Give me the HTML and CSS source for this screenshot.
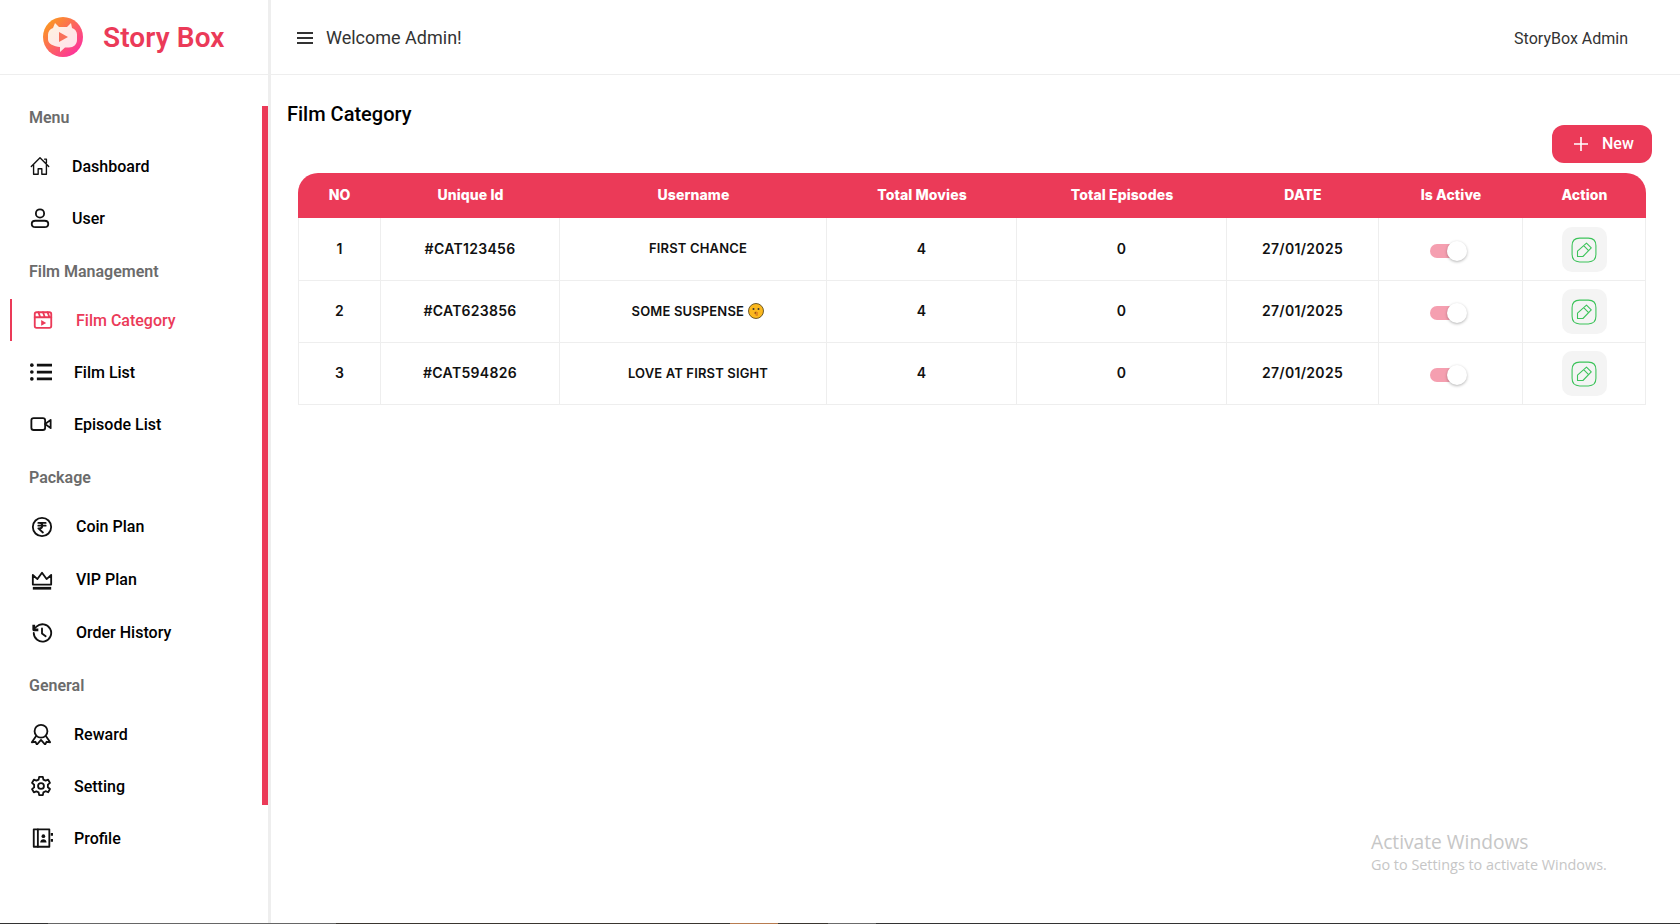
FILE: index.html
```html
<!DOCTYPE html>
<html lang="en">
<head>
    <meta charset="UTF-8">
    <title>Story Box</title>
    <link rel="stylesheet" href="styles.css">
</head>
<body>
    <!-- Sidebar -->
    <aside class="sidebar">
        <div class="brand">
            <svg class="brand-logo" viewBox="0 0 40 40">
                <defs>
                    <linearGradient id="logoGrad" x1="0.1" y1="0.1" x2="0.9" y2="0.9">
                        <stop offset="0" stop-color="#fb9a1e"/>
                        <stop offset="1" stop-color="#fd2fa0"/>
                    </linearGradient>
                    <linearGradient id="bubbleGrad" x1="0" y1="0" x2="1" y2="1">
                        <stop offset="0" stop-color="#fff3df"/>
                        <stop offset="1" stop-color="#ffe0ee"/>
                    </linearGradient>
                </defs>
                <circle cx="20" cy="20" r="20" fill="url(#logoGrad)"/>
                <path d="M12 6l4 4h8l4-4 1 5c3 1.200 5 3.500 5 6.500v5.500c0 4.500-3.500 7.500-8 7.500h-4l-5 4.500v-5c-6-.5-12-3-12-7.500V17.500c0-3 2-5.300 5-6.500z" fill="url(#bubbleGrad)"/>
                <path d="M16 15l9 5-9 5z" fill="#f8705a"/>
            </svg>
            <span class="brand-name">Story Box</span>
        </div>
        <nav class="nav">
            <div class="nav-group">
                <p class="nav-label">Menu</p>
                <a class="nav-item text-72">
                    <svg class="nav-icon" viewBox="0 0 24 24"><path d="M2.500 12.500L12 3l9.500 9.500M5 10.500V21h5v-6h4v6h5V10.500M17 4.500h2v4"/></svg>
                    <span>Dashboard</span>
                </a>
                <a class="nav-item text-72">
                    <svg class="nav-icon" viewBox="0 0 24 24"><circle class="bold" cx="12" cy="7" r="4.500"/><path class="bold" d="M7 15h10c2.500 0 4 1.500 4 3.500s-1.500 3.500-4 3.500H7c-2.500 0-4-1.500-4-3.500S4.500 15 7 15z"/></svg>
                    <span>User</span>
                </a>
            </div>
            <div class="nav-group">
                <p class="nav-label">Film Management</p>
                <a class="nav-item active text-76">
                    <svg class="nav-icon shift-3" viewBox="0 0 24 24"><rect class="bold" x="3" y="3.500" width="18" height="17" rx="2"/><path class="bold" d="M3 9h18M7 3.500l2 5.500M12 3.500l2 5.500M17 3.500l2 5.500"/><path class="solid" d="M10 12l5.500 3.200-5.500 3.200z"/></svg>
                    <span>Film Category</span>
                </a>
                <a class="nav-item text-74">
                    <svg class="nav-icon shift-1" viewBox="0 0 24 24"><path class="thick" d="M7.500 4.500H24M7.500 12H24M7.500 19.500H24"/><circle class="solid" cx="2" cy="4.500" r="2"/><circle class="solid" cx="2" cy="12" r="2"/><circle class="solid" cx="2" cy="19.500" r="2"/></svg>
                    <span>Film List</span>
                </a>
                <a class="nav-item text-74">
                    <svg class="nav-icon shift-1" viewBox="0 0 24 24"><rect class="bold" x="1.500" y="5.500" width="15" height="13" rx="2.500"/><path class="bold" d="M16.500 12l6-4.500v9z"/></svg>
                    <span>Episode List</span>
                </a>
            </div>
            <div class="nav-group tall">
                <p class="nav-label">Package</p>
                <a class="nav-item text-76">
                    <svg class="nav-icon shift-2" viewBox="0 0 24 24"><circle class="bold" cx="12" cy="12" r="10"/><path class="bold" d="M8 7.500h8M8 10.500h8M9 7.500c4.500 0 4.500 6 0 6h-1l5 4.500"/></svg>
                    <span>Coin Plan</span>
                </a>
                <a class="nav-item text-76">
                    <svg class="nav-icon shift-2" viewBox="0 0 24 24"><path class="bold" d="M2 6.500l5 4.500 5-7 5 7 5-4.500V17H2z"/><path class="thick" d="M2 21h20"/></svg>
                    <span>VIP Plan</span>
                </a>
                <a class="nav-item text-76">
                    <svg class="nav-icon shift-2" viewBox="0 0 24 24"><path class="bold" d="M3 12a9.500 9.500 0 1 0 3-7L3.200 7.500"/><path class="thick" d="M3 3v5.500h5"/><path class="bold" d="M12 7v5.500l4 3"/></svg>
                    <span>Order History</span>
                </a>
            </div>
            <div class="nav-group">
                <p class="nav-label">General</p>
                <a class="nav-item text-74">
                    <svg class="nav-icon shift-1" viewBox="0 0 24 24"><circle class="bold" cx="12" cy="9" r="7"/><path class="bold" d="M6.500 14.500L2 21l4-.5 1.500 3 4.500-5 4.500 5 1.500-3 4 .5-4.500-6.500"/></svg>
                    <span>Reward</span>
                </a>
                <a class="nav-item text-74">
                    <svg class="nav-icon shift-1" viewBox="0 0 24 24"><circle class="bold" cx="12" cy="12" r="3.200"/><path class="bold" d="M10 2h4l.6 3 2.400 1.200 2.800-1.100 2 3.500-2.300 1.900v2.900l2.300 1.900-2 3.500-2.800-1.100-2.400 1.200-.6 3h-4l-.6-3L7 17.800l-2.800 1.100-2-3.500 2.300-1.900v-2.900L2.200 8.600l2-3.500L7 6.200l2.400-1.200z"/></svg>
                    <span>Setting</span>
                </a>
                <a class="nav-item text-74">
                    <svg class="nav-icon shift-2" viewBox="0 0 24 24"><rect class="bold" x="3" y="2.500" width="17" height="19"/><path class="bold" d="M7.500 2.500v19"/><circle class="solid" cx="13.500" cy="10" r="2"/><path class="solid" d="M10 17c0-5 7-5 7 0z"/><path class="thick" d="M23 6.500v3M23 13v3"/></svg>
                    <span>Profile</span>
                </a>
            </div>
        </nav>
        <div class="scroll-thumb"></div>
    </aside>

    <div class="main">
        <!-- Top bar -->
        <header class="topbar">
            <div class="topbar-left">
                <svg class="menu-icon" viewBox="0 0 18 14"><path d="M1 2h16M1 7h16M1 12h16"/></svg>
                <span class="welcome">Welcome Admin!</span>
            </div>
            <span class="admin-name">StoryBox Admin</span>
        </header>

        <!-- Film category list -->
        <section class="content">
            <h1 class="page-title">Film Category</h1>
            <div class="toolbar">
                <button class="new-btn">
                    <svg class="plus-icon" viewBox="0 0 14 14"><path d="M7 0v14M0 7h14"/></svg>
                    New
                </button>
            </div>
            <table class="data-table">
                <thead>
                    <tr>
                        <th class="col-no">NO</th>
                        <th class="col-id">Unique Id</th>
                        <th class="col-name">Username</th>
                        <th class="col-movies">Total Movies</th>
                        <th class="col-episodes">Total Episodes</th>
                        <th class="col-date">DATE</th>
                        <th class="col-active">Is Active</th>
                        <th class="col-action">Action</th>
                    </tr>
                </thead>
                <tbody>
                    <tr>
                        <td>1</td>
                        <td>#CAT123456</td>
                        <td class="name-cell">FIRST CHANCE</td>
                        <td>4</td>
                        <td>0</td>
                        <td>27/01/2025</td>
                        <td class="control-cell"><span class="switch"><span class="switch-thumb"></span></span></td>
                        <td class="control-cell"><button class="edit-btn"><svg class="edit-icon" viewBox="0 0 24 24"><path d="M8 1h8c5 0 7 2 7 7v8c0 5-2 7-7 7H8c-5 0-7-2-7-7V8c0-5 2-7 7-7z"/><path d="M6 13l8.300-7.300 4.400 4.300-7.700 8H6zM11.700 8l4.300 4.300"/></svg></button></td>
                    </tr>
                    <tr>
                        <td>2</td>
                        <td>#CAT623856</td>
                        <td class="name-cell">SOME SUSPENSE
                            <svg class="emoji" viewBox="0 0 16 16"><circle cx="8" cy="8" r="7.500" fill="#fbb81f" stroke="#4d3c14" stroke-width="0.800"/><circle cx="5.500" cy="6" r="1" fill="#333"/><circle cx="10.500" cy="6" r="1" fill="#333"/><ellipse cx="8" cy="10" rx="1.500" ry="1.300" fill="#7a3b10"/><rect x="7.500" y="9" width="2.500" height="4" rx="1" fill="#e58a1f"/></svg>
                        </td>
                        <td>4</td>
                        <td>0</td>
                        <td>27/01/2025</td>
                        <td class="control-cell"><span class="switch"><span class="switch-thumb"></span></span></td>
                        <td class="control-cell"><button class="edit-btn"><svg class="edit-icon" viewBox="0 0 24 24"><path d="M8 1h8c5 0 7 2 7 7v8c0 5-2 7-7 7H8c-5 0-7-2-7-7V8c0-5 2-7 7-7z"/><path d="M6 13l8.300-7.300 4.400 4.300-7.700 8H6zM11.700 8l4.300 4.300"/></svg></button></td>
                    </tr>
                    <tr>
                        <td>3</td>
                        <td>#CAT594826</td>
                        <td class="name-cell">LOVE AT FIRST SIGHT</td>
                        <td>4</td>
                        <td>0</td>
                        <td>27/01/2025</td>
                        <td class="control-cell"><span class="switch"><span class="switch-thumb"></span></span></td>
                        <td class="control-cell"><button class="edit-btn"><svg class="edit-icon" viewBox="0 0 24 24"><path d="M8 1h8c5 0 7 2 7 7v8c0 5-2 7-7 7H8c-5 0-7-2-7-7V8c0-5 2-7 7-7z"/><path d="M6 13l8.300-7.300 4.400 4.300-7.700 8H6zM11.700 8l4.300 4.300"/></svg></button></td>
                    </tr>
                </tbody>
            </table>
        </section>
    </div>

    <!-- Windows watermark -->
    <div class="watermark">
        <p class="watermark-title">Activate Windows</p>
        <p class="watermark-sub">Go to Settings to activate Windows.</p>
    </div>

    <!-- Edge of the taskbar at the bottom of the capture -->
    <div class="taskbar-edge"></div>
</body>
</html>
```

FILE: styles.css
```css
* {
    box-sizing: border-box;
}
html, body {
    height: 100%;
}
body {
    position: relative;
    margin: 0;
    display: flex;
    height: 924px;
    overflow: hidden;
    background-color: #fff;
    color: #000;
    font-family: Roboto, "Liberation Sans", sans-serif;
}

/* Sidebar */
.sidebar {
    position: relative;
    width: 271px;
    flex-shrink: 0;
    border-right: 3px solid #eee;
}
.brand {
    display: flex;
    align-items: center;
    height: 75px;
    padding-left: 43px;
    border-bottom: 1px solid #eee;
}
.brand-logo {
    width: 40px;
    height: 40px;
}
.brand-name {
    margin-left: 20px;
    font-size: 28px;
    font-weight: 600;
    letter-spacing: 0.1px;
    color: #eb3a58;
}
.nav {
    padding: 31px 0 0 29px;
}
.nav-group {
    margin-bottom: 21px;
}
.nav-group.tall {
    margin-bottom: 20px;
}
.nav-label {
    margin: 0 0 15px;
    height: 24px;
    line-height: 24px;
    font-size: 16px;
    font-weight: 600;
    color: #6b6b6b;
}
.nav-item {
    position: relative;
    display: grid;
    align-items: center;
    height: 42px;
    margin-bottom: 10px;
    font-size: 16px;
    font-weight: 500;
    color: #000;
}
.nav-item:last-child {
    margin-bottom: 0;
}
.tall .nav-item {
    height: 43px;
}
/* the text column does not start at the same x in every section */
.text-72 { grid-template-columns: 43px 1fr; }
.text-74 { grid-template-columns: 45px 1fr; }
.text-76 { grid-template-columns: 47px 1fr; }
.nav-icon {
    width: 22px;
    height: 22px;
    fill: none;
    stroke: #111;
    stroke-width: 1.500;
    stroke-linejoin: round;
    stroke-linecap: round;
}
.shift-1 { margin-left: 1px; }
.shift-2 { margin-left: 2px; }
.shift-3 { margin-left: 3px; }
.nav-icon .bold {
    stroke-width: 2;
}
.nav-icon .solid {
    fill: #111;
    stroke: none;
}
.nav-icon .thick {
    stroke-width: 3;
    stroke-linecap: butt;
}
.nav-item.active {
    color: #eb3a58;
}
.nav-item.active::before {
    content: "";
    position: absolute;
    left: -19px;
    top: 0;
    width: 2px;
    height: 42px;
    background-color: #eb3a58;
}
.nav-item.active .nav-icon {
    stroke: #eb3a58;
}
.nav-item.active .solid {
    fill: #eb3a58;
}
.scroll-thumb {
    position: absolute;
    top: 106px;
    right: 0;
    width: 6px;
    height: 699px;
    background-color: #eb3a58;
}

/* Top bar */
.main {
    flex: 1;
    min-width: 0;
}
.topbar {
    display: flex;
    align-items: center;
    justify-content: space-between;
    height: 75px;
    padding: 0 52px 0 25px;
    border-bottom: 1px solid #eee;
}
.topbar-left {
    display: flex;
    align-items: center;
    gap: 12px;
}
.menu-icon {
    width: 18px;
    height: 14px;
    margin-top: 2px;
    fill: none;
    stroke: #333;
    stroke-width: 2;
}
.welcome {
    font-size: 18px;
    color: #333;
}
.admin-name {
    padding-top: 2px;
    font-size: 16px;
    color: #333;
}

/* Content */
.content {
    padding: 28px 28px 0 16px;
}
.page-title {
    margin: 0;
    line-height: 22px;
    font-size: 20px;
    font-weight: 500;
    color: #000;
}
.toolbar {
    display: flex;
    justify-content: flex-end;
    margin-bottom: 10px;
}
.new-btn {
    display: flex;
    align-items: center;
    gap: 14px;
    height: 38px;
    width: 100px;
    padding: 0 0 2px 22px;
    border: none;
    border-radius: 12px;
    background-color: #eb3a58;
    color: #fff;
    font-family: inherit;
    font-size: 16px;
    font-weight: 500;
}
.plus-icon {
    width: 14px;
    height: 14px;
    margin-top: 2px;
    fill: none;
    stroke: #fff;
    stroke-width: 1.600;
}

/* Table */
.data-table {
    width: 1348px;
    margin-left: 11px;
    table-layout: fixed;
    border-collapse: separate;
    border-spacing: 0;
    font-family: Inter, "Liberation Sans", sans-serif;
}
.data-table th {
    height: 45px;
    padding: 0 0 2px;
    background-color: #eb3a58;
    color: #fff;
    font-size: 14px;
    font-weight: 800;
    letter-spacing: 0.1px;
    text-align: center;
}
.data-table th:first-child {
    border-top-left-radius: 20px;
}
.data-table th:last-child {
    border-top-right-radius: 20px;
}
.col-no { width: 83px; }
.col-id { width: 179px; }
.col-name { width: 267px; }
.col-movies { width: 190px; }
.col-episodes { width: 210px; }
.col-date { width: 152px; }
.col-active { width: 144px; }
.col-action { width: 123px; }
.data-table td {
    height: 62px;
    padding: 0 0 2px;
    border-right: 1px solid #eee;
    border-bottom: 1px solid #eee;
    font-size: 14px;
    font-weight: 600;
    letter-spacing: 0.3px;
    color: #111;
    text-align: center;
}
.data-table tbody tr:first-child td {
    height: 63px;
}
.data-table td:first-child {
    border-left: 1px solid #eee;
}
.data-table td.name-cell {
    padding-left: 10px;
    font-size: 13px;
    letter-spacing: 0.15px;
}
.data-table td.control-cell {
    padding: 0;
}
.data-table tbody tr:first-child td.control-cell {
    padding-top: 1px;
}
.emoji {
    width: 16px;
    height: 16px;
    margin-left: 1px;
    vertical-align: -3px;
}
.switch {
    position: relative;
    display: inline-block;
    width: 34px;
    height: 14px;
    margin: -1px 8px 0 0;
    vertical-align: middle;
    border-radius: 7px;
    background-color: #f59fb0;
}
.switch-thumb {
    position: absolute;
    top: -3px;
    right: -3px;
    width: 20px;
    height: 20px;
    border-radius: 50%;
    background-color: #fff;
    box-shadow: 0 1px 3px rgba(0, 0, 0, 0.3);
}
.edit-btn {
    display: inline-flex;
    align-items: center;
    justify-content: center;
    width: 45px;
    height: 45px;
    padding: 0;
    vertical-align: middle;
    border: none;
    border-radius: 10px;
    background-color: #f4f4f4;
}
.edit-icon {
    width: 26px;
    height: 26px;
    fill: none;
    stroke: #3cc35a;
    stroke-width: 1;
    stroke-linejoin: round;
}

/* Watermark */
.watermark {
    position: absolute;
    left: 1371px;
    top: 829px;
    color: #c6c6c6;
    font-family: "Open Sans", sans-serif;
}
.watermark p {
    margin: 0;
}
.watermark-title {
    font-size: 19.2px;
    line-height: 26px;
}
.watermark-sub {
    font-size: 14.4px;
    line-height: 20px;
}
.taskbar-edge {
    position: absolute;
    left: 0;
    right: 0;
    bottom: 0;
    height: 1px;
    background: linear-gradient(to right,
        #333 0 48px,
        #666 48px 336px,
        #3a3630 336px 730px,
        #b87c50 730px 778px,
        #3a3630 778px 828px,
        #6b6b6b 828px 876px,
        #333 876px);
}
```
